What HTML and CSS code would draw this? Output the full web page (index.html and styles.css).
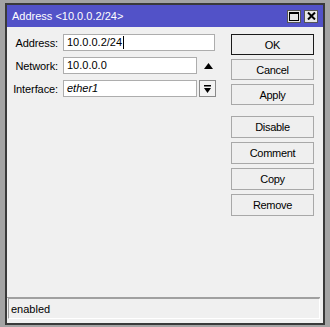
FILE: index.html
```html
<!DOCTYPE html>
<html>
<head>
<meta charset="utf-8">
<link rel="stylesheet" href="styles.css">
</head>
<body>
<div class="window">
  <div class="titlebar">
    <span class="title">Address &lt;10.0.0.2/24&gt;</span>
    <div class="tbtns">
      <span class="tbtn"><svg width="10" height="9" viewBox="0 0 10 9"><rect x="0.5" y="0.5" width="9" height="8" fill="none" stroke="#000" stroke-width="1"/><rect x="0" y="0" width="10" height="2" fill="#000"/></svg></span>
      <span class="tbtn"><svg width="9" height="8" viewBox="0 0 9 8"><path d="M1 0.5 L8 7.5 M8 0.5 L1 7.5" stroke="#000" stroke-width="2"/></svg></span>
    </div>
  </div>
  <div class="main">
    <div class="form">
      <div class="row">
        <span class="label">Address:</span>
        <div class="field field-long">10.0.0.2/24<span class="caret"></span></div>
      </div>
      <div class="row">
        <span class="label">Network:</span>
        <div class="field">10.0.0.0</div>
        <span class="uparrow"><svg width="9" height="6" viewBox="0 0 9 6"><polygon points="4.5,0 9,6 0,6" fill="#000"/></svg></span>
      </div>
      <div class="row">
        <span class="label">Interface:</span>
        <div class="field italic">ether1</div>
        <span class="ddbtn"><svg width="7" height="8" viewBox="0 0 7 8"><rect x="0" y="0" width="7" height="1.5" fill="#000"/><polygon points="0,3 7,3 3.5,8" fill="#000"/></svg></span>
      </div>
    </div>
    <div class="buttons">
      <div class="group group-top">
        <span class="btn btn-default">OK</span>
        <span class="btn">Cancel</span>
        <span class="btn">Apply</span>
      </div>
      <div class="group group-bottom">
        <span class="btn">Disable</span>
        <span class="btn">Comment</span>
        <span class="btn">Copy</span>
        <span class="btn">Remove</span>
      </div>
    </div>
  </div>
  <div class="status">
    <div class="status-box">enabled</div>
  </div>
</div>
</body>
</html>
```
FILE: styles.css
```css
* { box-sizing: border-box; }
html, body { margin: 0; padding: 0; }
body {
  background: #a4a4a4;
  padding: 3px 5px 2px 5px;
  font-family: "Liberation Sans", Arial, sans-serif;
  font-size: 11px;
  color: #000;
  width: 330px;
  height: 327px;
  overflow: hidden;
}
.window {
  width: 320px;
  height: 322px;
  border: 2px solid #3a3a3a;
  background: #f0f0f0;
  display: flex;
  flex-direction: column;
}
.titlebar {
  height: 22px;
  background: #5252c8;
  display: flex;
  align-items: center;
  justify-content: space-between;
  padding: 0 5px 0 5px;
  flex: none;
}
.title {
  color: #fff;
  font-size: 11px;
}
.tbtns {
  display: flex;
  gap: 3px;
}
.tbtn {
  width: 14px;
  height: 13px;
  background: #e6e6e6;
  border: 1px solid #555;
  display: flex;
  align-items: center;
  justify-content: center;
}
.main {
  flex: 1;
  display: flex;
  justify-content: space-between;
  padding: 7px 9px 0 0;
}
.form {
  display: flex;
  flex-direction: column;
  gap: 6px;
}
.row {
  display: flex;
  align-items: center;
  height: 17px;
}
.label {
  width: 51px;
  text-align: right;
  margin-right: 5px;
  letter-spacing: -0.1px;
}
.field {
  width: 134px;
  height: 17px;
  border: 1px solid #adadad;
  background: #fff;
  padding: 0 3px;
  line-height: 15px;
  font-size: 11px;
  display: flex;
  align-items: center;
}
.field-long { width: 152px; }
.italic { font-style: italic; }
.caret {
  display: inline-block;
  width: 1px;
  height: 13px;
  background: #000;
  margin-left: 1px;
}
.uparrow {
  margin-left: 7px;
  display: flex;
  align-items: center;
}
.ddbtn {
  margin-left: 2px;
  width: 17px;
  height: 17px;
  border: 1px solid #8a8a8a;
  background: #f3f3f3;
  display: flex;
  align-items: center;
  justify-content: center;
}
.buttons {
  width: 83px;
  display: flex;
  flex-direction: column;
}
.group {
  display: flex;
  flex-direction: column;
}
.group-top { gap: 4px; }
.group-top .btn { height: 21px; }
.group-bottom { gap: 4px; margin-top: 11px; }
.group-bottom .btn { height: 22px; }
.btn {
  display: flex;
  align-items: center;
  justify-content: center;
  border: 1px solid #a8a8a8;
  background: #efefef;
  font-size: 11px;
  letter-spacing: -0.3px;
}
.btn-default { border-color: #1a1a1a; }
.status {
  flex: none;
  margin: 0 3px 4px 0;
  border-top: 1px solid #a0a0a0;
  padding-left: 1px;
}
.status-box {
  height: 21px;
  border-top: 1px solid #a0a0a0;
  border-left: 1px solid #a0a0a0;
  border-right: 1px solid #fff;
  border-bottom: 1px solid #fff;
  padding-left: 2px;
  display: flex;
  align-items: center;
}
```
